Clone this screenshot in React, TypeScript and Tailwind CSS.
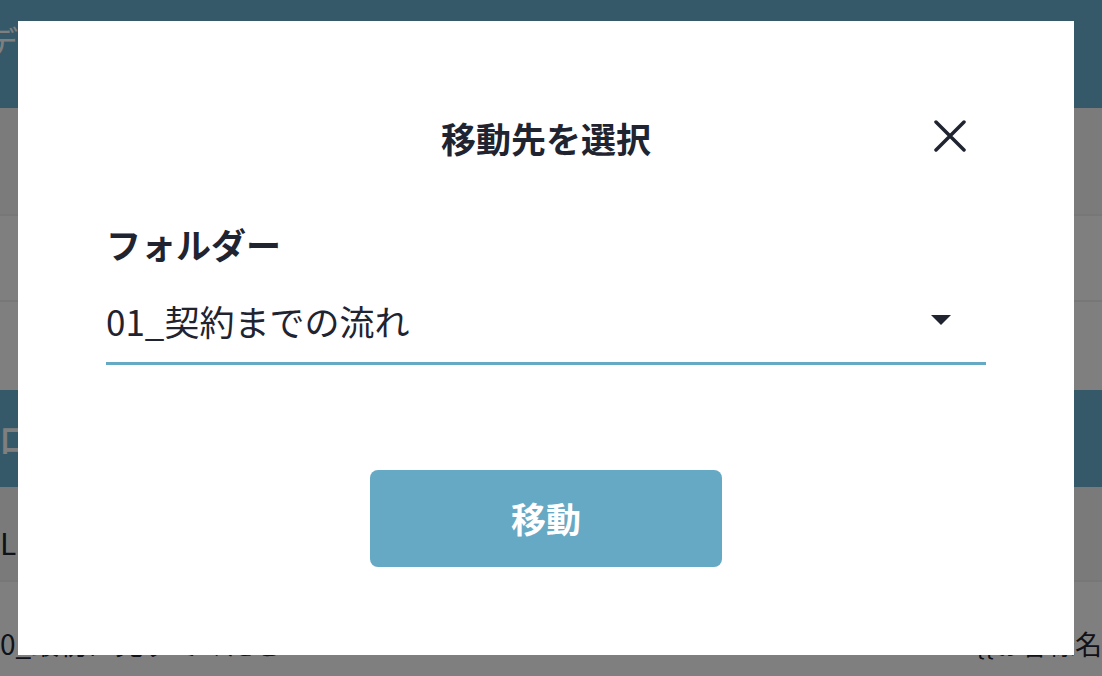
import { useState } from 'react';

const font = { fontFamily: '"Noto Sans CJK JP", "Noto Sans", sans-serif' };

function BackgroundPage() {
  return (
    <div className="w-[1102px] h-[676px] overflow-hidden bg-white text-[#1f2430]">
      {/* Header */}
      <header className="h-[108px] bg-[#6cb2d4] flex items-start pt-[16px]">
        <span className="ml-[-14px] text-[32px] leading-[1.5] text-white">データ管理</span>
      </header>
      <div className="h-[108px] bg-[#f7f7f7] border-b-2 border-[#eeeeee]" />
      <div className="h-[86px] bg-white border-b-2 border-[#eeeeee]" />
      <div className="h-[88px] bg-white" />
      <div className="h-[97px] bg-[#6cb2d4] flex items-center">
        <span className="text-[30px] font-bold text-white">口座設定</span>
      </div>
      <div className="h-[95px] bg-[#f5f5f5] flex items-center pt-[18px] border-b-2 border-[#eeeeee]">
        <span className="text-[30px]">LINE</span>
      </div>
      <div className="h-[92px] bg-white flex items-end justify-between pb-[10px]">
        <span className="text-[28px]">0_最初に見ずてください</span>
        <span className="text-[27px]">{'{{お客様名'}</span>
      </div>
    </div>
  );
}

function MoveDialog() {
  const [folder] = useState('01_契約までの流れ');

  return (
    <div className="fixed inset-0 bg-black/50 flex items-start justify-start pl-[18px] pt-[21px]">
      <div className="w-[1056px] h-[634px] bg-white px-[88px] pt-[93px] text-[#1f2430]">
        {/* Title */}
        <div className="relative h-[48px] flex items-center justify-center">
          <h2 className="text-[35px] leading-[48px] font-bold">移動先を選択</h2>
          <button className="absolute right-[20px] top-[6px] w-[32px] h-[32px]">
            <svg viewBox="0 0 32 32" className="w-[32px] h-[32px]" fill="none" stroke="#1f2430" strokeWidth="3.5" strokeLinecap="round">
              <path d="M2 2 L30 30 M30 2 L2 30" />
            </svg>
          </button>
        </div>

        {/* Folder select */}
        <div className="mt-[58px]">
          <label className="block text-[35px] leading-[48px] font-bold">フォルダー</label>
          <div className="mt-[29px] flex items-center justify-between border-b-[3px] border-[#66a9c4] pb-[17px]">
            <span className="text-[35px] leading-[48px]">{folder}</span>
            <svg viewBox="0 0 20 10" className="w-[20px] h-[10px] mr-[35px] mt-[-2px]" fill="#1f2430">
              <path d="M0 0 L20 0 L10 10 Z" />
            </svg>
          </div>
        </div>

        {/* Action */}
        <div className="mt-[105px] flex justify-center">
          <button className="w-[352px] h-[97px] rounded-lg bg-[#66a9c4] text-white text-[35px] font-bold">
            移動
          </button>
        </div>
      </div>
    </div>
  );
}

export default function App() {
  return (
    <div className="relative w-[1102px] h-[676px]" style={font}>
      <BackgroundPage />
      <MoveDialog />
    </div>
  );
}
